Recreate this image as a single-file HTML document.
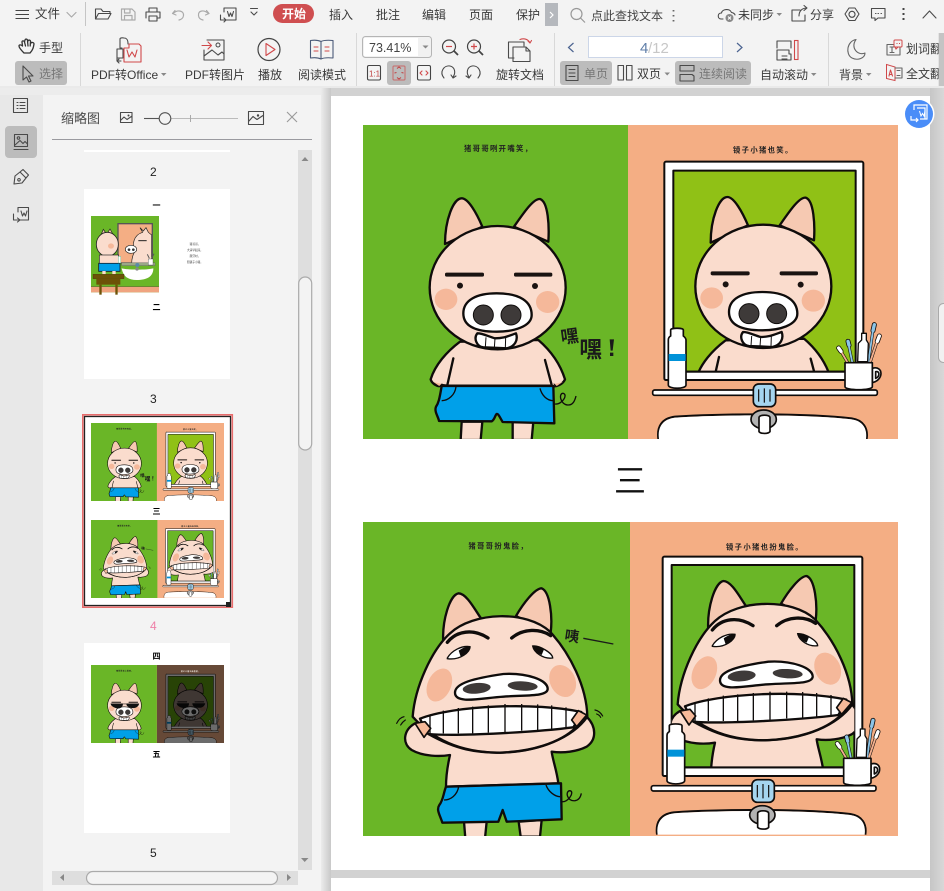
<!DOCTYPE html>
<html lang="zh-CN"><head><meta charset="utf-8"><title>PDF</title>
<style>
html,body{margin:0;padding:0;width:944px;height:891px;overflow:hidden;background:#d2d2d2}
svg{display:block}
text{font-family:"Liberation Sans","Noto Sans CJK SC",sans-serif;font-size:12px;fill:#3a3a3a}
.g{fill:#7d7d7d}
.i{fill:none;stroke:#4a4a4a;stroke-width:1.1;stroke-linejoin:round;stroke-linecap:round}
.l{fill:none;stroke:#aaa;stroke-width:1.2;stroke-linejoin:round;stroke-linecap:round}
.r{fill:none;stroke:#d0484a;stroke-width:1.1;stroke-linejoin:round;stroke-linecap:round}
.b{stroke:#0f0c0b;stroke-width:7;stroke-linejoin:round;stroke-linecap:round}
.n{fill:none}
.t{font-size:22px;font-weight:bold;fill:#222;letter-spacing:4px;text-anchor:middle}
.h{font-size:8px;font-weight:bold;fill:#000;text-anchor:middle}
</style></head><body>
<svg width="944" height="891" viewBox="0 0 944 891" xmlns="http://www.w3.org/2000/svg">
<defs>
<linearGradient id="gl" x1="0" x2="1" y1="0" y2="0"><stop offset="0" stop-color="#ececec"/><stop offset="1" stop-color="#c8c8c8"/></linearGradient>
<linearGradient id="gr" x1="0" x2="1" y1="0" y2="0"><stop offset="0" stop-color="#c6c6c6"/><stop offset="1" stop-color="#d8d8d8"/></linearGradient>
<clipPath id="cs"><rect width="535" height="314"/></clipPath>
<clipPath id="m1"><rect x="145" y="152" width="547" height="603"/></clipPath>
<clipPath id="m2"><rect x="140" y="135" width="548" height="607"/></clipPath>

<g id="pigA">
 <path class="b" fill="#fadccd" d="M300,665C260,695 225,735 212,778C215,790 235,805 245,795L262,797L570,797C590,805 610,790 615,778C600,730 570,690 535,660Z"/>
 <path class="b" fill="#f6b999" d="M216,785L238,800L246,792M612,785L590,800L582,792" style="stroke-width:3"/>
 <path class="b n" d="M280,715L262,795M555,720L575,795"/>
 <path class="b" fill="#fadccd" d="M305,905L302,960L362,960L367,905ZM458,905L458,960L515,960L520,905Z"/>
 <path class="b" fill="#00a0e9" d="M245,798L580,798L583,910L428,906C420,893 415,880 410,882C405,885 405,898 395,904L237,903C235,890 222,875 228,860C235,850 238,840 245,798Z"/>
 <path class="n" stroke="#0f0c0b" stroke-width="4" d="M245,842C265,842 285,825 288,800M580,842C560,842 545,825 540,805M585,852C605,855 625,825 610,820C595,818 600,855 625,855C640,855 645,840 648,828"/>
 <path class="b" fill="#f6c9b2" d="M255,372C255,300 280,235 305,235C325,235 350,280 367,320ZM462,320C490,280 520,235 540,237C565,245 568,320 565,365Z"/>
 <ellipse class="b" fill="#fadccd" cx="413" cy="503" rx="204" ry="185"/>
 <ellipse cx="258" cy="538" rx="34" ry="32" fill="#f5b89a"/><ellipse cx="563" cy="546" rx="35" ry="33" fill="#f5b89a"/>
 <rect x="255" y="458" width="117" height="12" rx="5" fill="#1a1311"/><rect x="462" y="458" width="115" height="12" rx="5" fill="#1a1311"/>
 <circle cx="300" cy="497" r="9" fill="#1a1311"/><circle cx="525" cy="498" r="9" fill="#1a1311"/>
 <path class="b" fill="#fff" d="M352,640C340,655 350,680 370,682L440,685C465,680 475,660 468,640C440,650 430,655 405,655C385,650 370,640 352,640Z"/>
 <path class="n" stroke="#0f0c0b" stroke-width="3" d="M378,652L376,682M405,655L403,684M437,652L436,684"/>
 <path class="b" fill="#fff" d="M310,580C310,540 350,520 410,520C480,520 515,545 515,585C515,620 460,635 410,635C350,635 310,620 310,580Z"/>
 <circle cx="370" cy="585" r="30" fill="#3e3a39" stroke="#0f0c0b" stroke-width="3"/><circle cx="453" cy="585" r="30" fill="#3e3a39" stroke="#0f0c0b" stroke-width="3"/>
</g>

<g id="fix">
 <rect class="b" style="stroke-width:5" fill="#fff" x="83" y="810" width="674" height="16" rx="6"/>
 <path class="n" stroke="#0f0c0b" stroke-width="6" d="M100,957C95,920 110,895 150,890C300,880 550,880 680,895C715,900 730,925 725,957"/><path fill="#fff" d="M102,957C97,923 112,898 150,893C300,883 550,883 680,898C713,903 727,925 723,957Z"/>
 <ellipse class="b" fill="#b3b3b3" style="stroke-width:5" cx="416" cy="898" rx="38" ry="28"/>
 <path class="b" style="stroke-width:5" fill="#fff" d="M402,893C402,883 435,883 435,893L435,935C430,942 408,942 402,935Z"/>
 <rect class="b" style="stroke-width:5" fill="#a5d5ef" x="385" y="792" width="67" height="68" rx="16"/>
 <path class="n" stroke="#0f0c0b" stroke-width="3.500" d="M401,808V845M418,805V848M435,808V845"/>
 <path class="b" style="stroke-width:5" fill="#fff" d="M137,648V630C137,623 175,623 175,630V648C180,652 183,655 183,660V795C183,808 130,808 130,795V660C130,655 133,650 137,648Z"/>
 <rect x="131" y="702" width="51" height="21" fill="#0092d8"/>
 <path class="n" stroke="#0f0c0b" stroke-width="9" d="M668,728L648,694M682,728L672,680M730,728L744,630M735,728L756,665"/>
 <path class="n" stroke="#0f0c0b" stroke-width="15" stroke-linecap="round" d="M648,694L641,684M672,676L669,664M744,632L748,614M757,664L763,648"/>
 <path class="n" stroke="#f3b08f" stroke-width="5.500" d="M668,728L648,694M735,728L756,665"/>
 <path class="n" stroke="#8cc4e6" stroke-width="5.500" d="M682,728L672,680M730,728L744,630"/>
 <path class="n" stroke="#fff" stroke-width="10" stroke-linecap="round" d="M648,694L641,684M757,664L763,648"/>
 <path class="n" stroke="#8cc4e6" stroke-width="10" stroke-linecap="round" d="M672,676L669,664M744,632L748,614"/>
 <path class="b" style="stroke-width:4" fill="#fff" d="M698,725L700,670L710,660V640H724V660L730,670L728,725Z"/>
 <path class="b" style="stroke-width:5" fill="#fff" d="M742,745C775,735 778,780 742,788ZM752,755C765,752 765,770 752,775Z"/>
 <path class="b" style="stroke-width:5" fill="#fff" d="M660,728H742V800C742,812 660,812 660,800Z"/>
</g>

<g id="pigB">
 <path class="b" fill="#f6c9b2" d="M250,372C245,300 270,225 295,220C320,220 345,270 365,298ZM468,288C490,250 525,205 545,205C570,215 578,290 572,338Z"/>
 <path class="b" fill="#fadccd" d="M312,905L316,955L375,955L380,905ZM476,905L482,950L540,950L545,900Z"/>
 <path class="b" fill="#fadccd" d="M165,610C130,630 125,670 155,690C190,710 240,710 270,705C262,740 258,770 258,800L595,790C590,750 578,720 575,695C610,700 650,695 680,680C710,660 710,620 680,590Z"/>
 <path class="b" fill="#00a0e9" d="M258,800L603,790L605,898L440,905L428,870L415,905L247,908C240,885 228,870 238,855C250,840 250,820 258,800Z"/>
 <path class="n" stroke="#0f0c0b" stroke-width="4" d="M252,840C272,840 292,825 296,800M600,830C585,830 565,815 558,795M605,845C625,848 645,815 630,812C615,812 620,845 645,842C658,840 662,830 664,820"/>
 <path class="b" fill="#fadccd" d="M158,590C165,500 215,390 270,340C340,275 500,270 570,335C630,400 680,500 682,590C640,650 540,698 410,698C300,695 220,660 158,590Z"/>
 <ellipse cx="238" cy="495" rx="35" ry="52" fill="#f5b89a" transform="rotate(25 238 495)"/>
 <ellipse cx="608" cy="483" rx="38" ry="50" fill="#f5b89a" transform="rotate(-25 608 483)"/>
 <path class="n" stroke="#0f0c0b" stroke-width="10" stroke-linecap="round" d="M262,367C290,332 340,325 384,354M455,354C490,325 540,325 572,347"/>
 <path stroke="#0f0c0b" stroke-width="4" fill="#fff" d="M262,414C275,392 305,376 330,380C332,395 300,422 262,416ZM518,378C540,376 578,400 578,414C550,418 522,398 518,378Z"/>
 <path fill="#0f0c0b" d="M296,392C310,382 322,378 330,380C328,394 315,404 302,410ZM518,378C530,377 542,382 552,388L545,405C530,400 522,390 518,378Z"/>
 <path class="b" fill="#fff" d="M285,518C285,490 340,475 430,462C500,458 565,480 563,508C560,530 500,525 430,530C370,533 285,555 285,518Z"/>
 <ellipse cx="350" cy="505" rx="42" ry="16" fill="#3e3a39" transform="rotate(-5 350 505)"/><ellipse cx="488" cy="498" rx="45" ry="14" fill="#3e3a39" transform="rotate(3 488 498)"/>
 <path class="b" fill="#fff" d="M180,596C280,556 530,546 664,576C660,590 650,605 640,622C540,635 300,650 205,642C195,630 188,612 180,596Z"/>
 <path class="n" stroke="#0f0c0b" stroke-width="4" d="M250,572V640M295,564V640M338,560V640M385,556V638M435,552V636M485,552V632M533,553V630M575,556V628M618,562V625M210,585V640"/>
 <path class="b n" d="M205,642C290,690 350,698 420,698C510,695 600,670 648,622"/>
 <path class="b" style="stroke-width:5" fill="#f6b999" d="M165,610L195,605L212,625L192,652ZM680,585L655,572L635,600L650,620Z"/>
 <path class="n" stroke="#0f0c0b" stroke-width="3.500" stroke-linecap="round" d="M110,610C116,598 122,592 132,590M122,615C126,608 130,604 136,600M705,570C715,572 722,578 728,588M710,582C716,584 720,588 722,592"/>
</g>

<g id="s1"><g clip-path="url(#cs)">
 <rect width="266" height="314" fill="#6ab627"/><rect x="265" width="270" height="314" fill="#f4ae84"/>
 <g transform="translate(-3,-5) scale(.33333)">
  <text class="t" x="416" y="93">猪哥哥咧开嘴笑，</text>
  <use href="#pigA"/>
  <text x="602" y="668" style="font-size:54px;font-weight:bold;fill:#1a1a1a" transform="rotate(-8 630 650)">嘿</text>
  <text x="658" y="712" style="font-size:68px;font-weight:bold;fill:#1a1a1a">嘿</text>
  <path fill="#1a1a1a" d="M749,658H762L758,692H752ZM750,698H760V708H750Z"/>
 </g>
 <g transform="translate(262,-5) scale(.33333)">
  <text class="t" x="415" y="97">镜子小猪也笑。</text>
  <rect class="b" style="stroke-width:6" fill="#fff" x="118" y="125" width="597" height="655" rx="5"/>
  <rect class="b" style="stroke-width:6" fill="#90c116" x="145" y="152" width="547" height="603"/>
  <g clip-path="url(#m1)"><use href="#pigA" transform="translate(2,-4)"/></g>
  <path d="M145,755H692" stroke="#0f0c0b" stroke-width="6"/>
  <use href="#fix"/>
 </g>
</g></g>

<g id="s2"><g clip-path="url(#cs)">
 <rect width="268" height="314" fill="#6ab627"/><rect x="267" width="268" height="314" fill="#f4ae84"/>
 <g transform="translate(-3,-2) scale(.33333)">
  <text class="t" x="416" y="85">猪哥哥扮鬼脸，</text>
  <use href="#pigB"/>
  <text x="614" y="365" style="font-size:44px;font-weight:bold;fill:#1a1a1a" transform="rotate(8 640 350)">咦</text>
  <path d="M670,355L760,372" stroke="#1a1a1a" stroke-width="4"/>
 </g>
 <g transform="translate(262,-2) scale(.33333)">
  <text class="t" x="420" y="88">镜子小猪也扮鬼脸。</text>
  <rect class="b" style="stroke-width:6" fill="#fff" x="113" y="110" width="599" height="658" rx="5"/>
  <rect class="b" style="stroke-width:6" fill="#6ab627" x="140" y="135" width="548" height="607"/>
  <g clip-path="url(#m2)"><use href="#pigB" transform="translate(0,-37)"/></g>
  <path d="M140,742H688" stroke="#0f0c0b" stroke-width="6"/>
  <use href="#fix" transform="translate(-4,-13)"/>
 </g>
</g></g>

<g id="s3"><g clip-path="url(#cs)">
 <rect width="266" height="314" fill="#6ab627"/><rect x="265" width="270" height="314" fill="#f4ae84"/>
 <g transform="translate(-3,-5) scale(.33333)">
  <text class="t" x="416" y="93">猪哥哥戴上墨镜，</text>
  <use href="#pigA"/>
  <path fill="#111" d="M245,480H395C395,530 355,550 310,535C280,525 250,510 245,480ZM435,480H590C585,515 550,540 510,535C470,530 435,520 435,480Z"/>
  <path d="M395,485H435" stroke="#111" stroke-width="7"/>
 </g>
 <g transform="translate(262,-5) scale(.33333)">
  <rect class="b" style="stroke-width:6" fill="#fff" x="118" y="125" width="597" height="655" rx="5"/>
  <rect class="b" style="stroke-width:6" fill="#5fa010" x="145" y="152" width="547" height="603"/>
  <g clip-path="url(#m1)"><use href="#pigA" transform="translate(2,-4)" style="filter:brightness(.6)"/>
  <path fill="#111" d="M247,476H397C397,526 357,546 312,531C282,521 252,506 247,476ZM437,476H592C587,511 552,536 512,531C472,526 437,516 437,476Z"/>
  <ellipse cx="412" cy="577" rx="102" ry="57" fill="#fff" stroke="#111" stroke-width="6"/><circle cx="372" cy="581" r="30" fill="#222"/><circle cx="455" cy="581" r="30" fill="#222"/></g>
  <use href="#fix"/>
  <rect x="10" y="0" width="815" height="960" fill="#000" opacity=".58"/>
  <text class="t" x="415" y="97" style="fill:#e8e0d8">镜子小猪也戴墨镜。</text>
 </g>
</g></g>
</defs>

<!-- backgrounds -->
<rect width="944" height="891" fill="#d2d2d2"/>
<rect x="0" y="88" width="43" height="803" fill="#e8e8e8"/>
<rect x="43" y="88" width="278" height="803" fill="#f3f3f3"/>
<rect x="321" y="88" width="10" height="803" fill="url(#gl)"/>
<rect x="930" y="88" width="14" height="803" fill="url(#gr)"/>
<rect x="0" y="0" width="944" height="88" fill="#f3f3f3"/>
<rect x="0" y="88" width="321" height="7" fill="#ececec"/>

<!-- row 1 -->
<path d="M15.500 10.500H29M15.500 14.500H29M15.500 18.500H29" stroke="#444" stroke-width="1.100"/>
<text x="35" y="18" style="font-size:12.500px">文件</text>
<path class="l" d="M67,12.500L71.500,17L76,12.500"/>
<path d="M85.500,2V26" stroke="#c5c5c5"/>
<path class="i" d="M95.500,19V9H101L103,11.500H110V13.500M95.500,19L98.500,13.500H111L108,19Z"/>
<path class="l" d="M121.500,9H132L135,12V20H121.500ZM124.500,9V13H130V9M124.500,20V15.500H132V20"/>
<path class="i" d="M149,12V8H157V12M146,18V12H160V18H157M149,16H157V21H149V16"/>
<path class="l" d="M175,10.500L172.500,13.500L176,15M173,13.500C178,9 184,11 183.500,15.500C183.300,18 181,19.500 179,20"/>
<path class="l" d="M206.500,10.500L209,13.500L205.500,15M208.500,13.500C203,9 198,11 198.500,15.500C198.700,18 200.500,19.500 203,20"/>
<path class="i" d="M224,8H236V20H226M224,8V12M227.500,11.500L229,16.500L230.500,13L232,16.500L233.500,11.500M220.500,15V20H226M224,18L226,20L224,22"/>
<path class="i" d="M250.500,8.500H257.500M251,12L254,15L257,12"/>
<rect x="273" y="4" width="41" height="19" rx="9.500" fill="#cf4e50"/>
<text x="282" y="18" style="fill:#fff;font-size:12px;font-weight:bold">开始</text>
<text x="329" y="19">插入</text><text x="376" y="19">批注</text><text x="422" y="19">编辑</text><text x="469" y="19">页面</text><text x="516" y="19">保护</text>
<rect x="545" y="3" width="13" height="23" fill="#b5b8bd"/>
<path d="M550,12L553,15L550,18" fill="none" stroke="#fff" stroke-width="1.200"/>
<circle cx="576.500" cy="14" r="5.500" fill="none" stroke="#999" stroke-width="1.200"/><path d="M580.500,18L585,22.500" stroke="#999" stroke-width="1.200"/>
<text x="591" y="20" style="fill:#444">点此查找文本</text>
<path d="M673.500,10V11.500M673.500,15V16.500M673.500,20V21.500" stroke="#666" stroke-width="1.800"/>
<path class="i" d="M723,19H721C717.500,19 717,13 721.500,13C722,9 730,8 731.500,12.500C733,12.500 735,14 735,15"/>
<circle cx="729.500" cy="18" r="4" fill="#888"/><path d="M728,16.500L731,19.500M731,16.500L728,19.500" stroke="#fff"/>
<text x="738" y="19">未同步</text>
<path d="M776.500,13H782L779.300,16Z" fill="#888"/>
<path class="i" d="M800,10H792V21H805V15M799,16C799,11 802,8 807,8M804,5.500L807,8L804,10.500"/>
<text x="810" y="19">分享</text>
<path class="i" d="M849,8H855L859,14L855,20.500H849L845,14ZM852,11.300A3,3 0 1 0 852.010,11.300"/>
<path class="i" d="M871.500,8.500H885V18H878L875,20.500V18H871.500ZM875.500,13.500H876M878,13.500H878.500M881,13.500H881.500"/>
<path d="M903.500,8V10M903.500,13V15M903.500,18V20" stroke="#444" stroke-width="2"/>
<path class="i" d="M923,18L929.500,11L936,18"/>

<!-- row 2 -->
<path d="M24,53C22,51 19,48 19,46C19,44.500 21,44.500 22.500,46L22,42C22,40.500 24,40.500 24.500,42L25,40C25.500,38.500 27.500,39 27.500,40.500L28,41C28.500,39.500 30.500,40 30.500,41.500L31,43C32,42 34,42.500 34,44C33.500,47 33,50 30,53ZM24.500,42L25.500,46M27.500,40.500L28,46M30.500,41.500L30.200,46" fill="none" stroke="#333" stroke-width="1.300" stroke-linejoin="round" stroke-linecap="round"/>
<text x="39" y="52">手型</text>
<rect x="15" y="61" width="52" height="24" rx="3" fill="#bcbcbc"/>
<path class="i" d="M23,66L23,80L26.500,77L29,82L31,81L28.500,76L33,76Z"/>
<text x="39" y="78" style="fill:#777">选择</text>
<path d="M80.500,33V86" stroke="#d8d8d8"/>
<path class="i" d="M122,48H120V39C120,38 122,37.500 124,38C127,38 128,40 128,44M117,49H123V58H117ZM121,61L117,61V58M119,63L117,61L119,59"/>
<path class="r" d="M129,44H139L141,46V62H124V48H129ZM127,50L129,57L132,52L135,57L137,50"/>
<text x="91" y="79">PDF转Office</text>
<path d="M161,73H166.500L163.700,76Z" fill="#888"/>
<path class="i" d="M207,40H224V60H204V50"/>
<path class="r" d="M202,45.500H211M208,42L211.500,45.500L208,49"/>
<path class="i" d="M204,56L212,50L218,55L222,52L224,54"/>
<circle cx="218" cy="45" r="2" fill="none" stroke="#444"/>
<text x="185" y="79">PDF转图片</text>
<circle cx="269" cy="49.500" r="11" fill="none" stroke="#444" stroke-width="1.200"/>
<path class="r" d="M266,43.500L275,49.500L266,55.500Z"/>
<text x="258" y="79">播放</text>
<path class="i" d="M321,41.500C318,40 314,40 310.500,40.500V58C314,57.500 318,57.500 321,59C324,57.500 328,57.500 333,58V40.500C328,40 324,40 321,41.500V59" style="stroke:#4b5a78"/>
<path class="r" d="M314,47H318M314,51H318M325,47H329M325,51H329"/>
<text x="298" y="79">阅读模式</text>
<path d="M356.500,33V86" stroke="#d8d8d8"/>
<rect x="362.500" y="36.500" width="69" height="21" rx="3" fill="#f1f1f1" stroke="#b5b5b5"/>
<rect x="364" y="38" width="54" height="18" fill="#fff"/>
<text x="369" y="52" style="fill:#444;font-size:12.500px">73.41%</text>
<path d="M422.500,45.500H428.500L425.500,48.500Z" fill="#888"/>
<circle cx="449" cy="46.500" r="6.500" fill="none" stroke="#444" stroke-width="1.200"/><path d="M446,46.500H452" stroke="#d0484a" stroke-width="1.200"/><path d="M454,51L458,55" stroke="#444" stroke-width="1.800"/>
<circle cx="474" cy="46.500" r="6.500" fill="none" stroke="#444" stroke-width="1.200"/><path d="M471,46.500H477M474,43.500V49.500" stroke="#d0484a" stroke-width="1.200"/><path d="M479,51L483,55" stroke="#444" stroke-width="1.800"/>
<rect x="367.500" y="65.500" width="13" height="14.500" rx="1.500" fill="none" stroke="#444" stroke-width="1.100"/>
<text x="369" y="76.500" style="font-size:8px;fill:#c04040">1:1</text>
<rect x="387" y="61" width="24" height="24" rx="3" fill="#bcbcbc"/>
<rect x="393" y="66" width="12" height="14" rx="1" fill="none" stroke="#c86a6a"/><path d="M396.500,72.500L394.500,73M401.500,72.500L403.500,73M397,68.500L399,67L401,68.500M397,77.500L399,79L401,77.500" fill="none" stroke="#c04040"/>
<rect x="417.500" y="65.500" width="13" height="14.500" rx="1.500" fill="none" stroke="#444" stroke-width="1.100"/>
<path class="r" d="M422,71L420,73L422,75M426,71L428,73L426,75"/>
<path class="i" d="M444,78C439,72 444,65 450,66C455,67 456,73 453,77M451,75L453,78L456,76"/>
<path class="i" d="M478,78C483,72 478,65 472,66C467,67 466,73 469,77M471,75L469,78L466,76"/>
<path class="i" d="M514,58H508.500V42H524V46M513,47H526L530,51V61.500H513ZM526,47V51H530"/>
<path class="r" d="M520,39.500C524,38 528,39 530,43M530,43L528,41M530,43L531.500,40.500"/>
<text x="496" y="79">旋转文档</text>
<path d="M554.500,33V86" stroke="#d8d8d8"/>
<path d="M573.500,43L568.500,47.500L573.500,52" fill="none" stroke="#4b6390" stroke-width="1.200"/>
<rect x="588.500" y="36.500" width="134" height="21" fill="#fff" stroke="#ccd6e8"/>
<text x="640" y="53" style="fill:#5f7ea8;font-size:15px">4</text>
<text x="648" y="53" style="fill:#c7c7c7;font-size:15px">/12</text>
<path d="M737,43L742,47.500L737,52" fill="none" stroke="#4b6390" stroke-width="1.200"/>
<rect x="560" y="61" width="52" height="24" rx="3" fill="#bcbcbc"/>
<path class="i" d="M566,65.500H578V80.500H566ZM569,69.500H575M569,73H575M569,76.500H575"/>
<text x="584" y="78" style="fill:#777">单页</text>
<path class="i" d="M618,65.500H623.500V80H618ZM626.500,65.500H632V80H626.500Z"/>
<text x="637" y="78">双页</text>
<path d="M664.500,72.500H670L667.200,75.500Z" fill="#888"/>
<rect x="675" y="61" width="76" height="24" rx="3" fill="#bcbcbc"/>
<path class="i" d="M680,65.500H694V71H680ZM680,74.500H692L694,76V81H680Z"/>
<text x="699" y="78" style="fill:#777">连续阅读</text>
<path class="i" d="M777,48V41H791V48M777,60V50H789V54H791V60ZM782,56H787M782,59H787"/>
<rect x="794.500" y="40.500" width="3.500" height="19" fill="none" stroke="#d0484a" stroke-width="1.100"/>
<text x="760" y="79">自动滚动</text>
<path d="M811,73H816.500L813.700,76Z" fill="#888"/>
<path d="M828.500,33V86" stroke="#d8d8d8"/>
<path class="i" d="M856,39.500C847,41 845,54 852,58C858,61 865,58 865,53C858,56 850,48 856,39.500Z" style="stroke:#666"/>
<text x="839" y="79">背景</text>
<path d="M866,73H871.500L868.700,76Z" fill="#888"/>
<path class="i" d="M887,44.500H900V55H887ZM890,47H894M892,47V52.500M890,52.500H894" style="stroke:#666"/>
<rect x="894" y="40" width="8" height="7" rx="1" fill="#f3f3f3" stroke="#d0484a"/><path d="M895,47L896,49L898,47" fill="none" stroke="#d0484a"/><path d="M896.500,43.500H897.500M899,43.500H900" stroke="#d0484a"/>
<text x="906" y="53">划词翻译</text>
<path d="M886.500,64.500L895,67V80.500L886.500,78.500Z" fill="#f3f3f3" stroke="#d0484a"/>
<path class="r" d="M889,76L890.500,70L892.500,76M889.500,74.500H892"/>
<path class="i" d="M895,68H902V78H895M897,70.500H900M897,75.500H900" style="stroke:#666"/>
<text x="906" y="78">全文翻译</text>
<rect x="938.700" y="33" width="5.300" height="54" fill="#c4c4c4"/>
<rect x="0" y="86" width="944" height="2" fill="#eaeaea"/>

<!-- left rail -->
<path class="i" d="M13.500,98.500H27.500V112.500H13.500ZM17,102.500H18M20,102.500H25M17,105.500H18M20,105.500H25M17,108.500H18M20,108.500H25"/>
<rect x="5" y="126" width="32" height="32" rx="4" fill="#bcbcbc"/>
<path class="i" d="M14.500,134.500H27.500V146.500H14.500ZM15,145L20,140.500L23,143.500L25,141.500L27.500,144M14,149.500H28"/>
<circle cx="18.500" cy="138" r="1.300" fill="none" stroke="#444"/>
<path class="i" d="M14,184L15,176L20,172L26,178L22,183ZM20,172L23,169.500L28.500,175L26,178M19,178.500A1.300,1.300 0 1 0 19.010,178.500"/>
<path class="i" d="M18,207.500H28.500V220H20M18,207.500V212M21,211L22.500,216L24,213L25.500,216L27,211M13.500,214V220H20M17.500,218L20,220L17.500,222"/>

<!-- thumb panel header -->
<text x="61" y="123" style="font-size:13px;fill:#4a4a4a">缩略图</text>
<path class="i" d="M120.500,112.500H132V122.500H120.500ZM121,120L124,117L127,119.500L132,116"/><circle cx="128.500" cy="115.500" r="1" fill="#444"/>
<path d="M144,118.500H159" stroke="#555" stroke-width="1.100"/><path d="M171,118.500H238" stroke="#bbb" stroke-width="1.100"/><path d="M190.500,115V122" stroke="#aaa"/>
<circle cx="165" cy="118.500" r="5.800" fill="#f3f3f3" stroke="#555" stroke-width="1.100"/>
<path class="i" d="M248.500,111.500H263.500V124.500H248.500ZM249,121L253,116.500L257,119.500L263,115.500"/><circle cx="258" cy="115.500" r="1.200" fill="#444"/>
<path d="M287,112L297,122M297,112L287,122" stroke="#999" stroke-width="1.100"/>
<rect x="52" y="139" width="260" height="1" fill="#9a9a9f"/>

<!-- thumb scrollbars -->
<rect x="298" y="150" width="14" height="720" fill="#dedede"/>
<path d="M301.500,161H308.500L305,157Z" fill="#888"/>
<path d="M301,858H308.500L304.700,862Z" fill="#888"/>
<rect x="298.700" y="277" width="13" height="173" rx="6.500" fill="#f3f3f3" stroke="#aaa" stroke-width="1.200"/>
<rect x="52" y="871" width="246" height="14" fill="#dedede"/>
<path d="M64,874V881L60,877.500Z" fill="#888"/>
<rect x="86.500" y="871.500" width="191" height="13" rx="6.500" fill="#f3f3f3" stroke="#aaa" stroke-width="1.200"/>
<path d="M287,874V881L291,877.500Z" fill="#888"/>

<!-- thumb 2 tail -->
<rect x="84" y="150" width="146" height="2" fill="#fff"/>
<text x="150" y="176" style="font-size:12px;fill:#222">2</text>

<!-- thumb 3 -->
<rect x="84" y="189" width="146" height="190" fill="#fff"/>
<text class="h" x="156.500" y="208">一</text>
<g transform="translate(0,95) scale(.33333)">
 <rect x="273" y="363" width="204" height="229" fill="#6ab627"/>
 <rect x="273" y="575" width="204" height="17" fill="#f0a480"/><path d="M273,575H477" stroke="#6a6a3a" stroke-width="2"/>
 <rect x="354" y="386" width="103" height="118" fill="#f4ae84" stroke="#555" stroke-width="4"/>
 <path d="M395,505C395,490 400,475 405,470C395,450 400,420 428,412L420,398L430,408L438,398L445,412L455,420V505Z" fill="#fadccd" stroke="#222" stroke-width="2"/>
 <path d="M415,437H440" stroke="#222" stroke-width="3"/>
 <path d="M303,420L310,403L320,418L330,402L340,420Z" fill="#f6c9b2" stroke="#222" stroke-width="2"/>
 <ellipse cx="322" cy="448" rx="33" ry="36" fill="#fadccd" stroke="#222" stroke-width="2.500"/>
 <ellipse cx="333" cy="453" rx="9" ry="8" fill="#f5b89a"/>
 <rect x="298" y="480" width="58" height="30" fill="#fadccd" stroke="#222" stroke-width="2"/>
 <path d="M365,503H465V512H365Z" fill="#9aa888" stroke="#555"/>
 <path d="M365,520C385,525 440,525 460,520C460,545 440,555 410,555C385,555 370,545 365,520Z" fill="#fff"/>
 <rect x="296" y="505" width="64" height="24" fill="#00a0e9" stroke="#123" stroke-width="2.500"/>
 <rect x="307" y="528" width="10" height="10" fill="#fadccd"/><rect x="337" y="528" width="10" height="10" fill="#fadccd"/>
 <ellipse cx="393" cy="463" rx="17" ry="12" fill="#fff" stroke="#222" stroke-width="2"/><circle cx="387" cy="464" r="4" fill="#333"/><circle cx="400" cy="464" r="4" fill="#333"/>
 <rect x="279" y="538" width="93" height="13" fill="#6d5207" stroke="#3b2c05"/><rect x="289" y="551" width="72" height="18" fill="#6d5207"/>
 <rect x="298" y="569" width="7" height="30" fill="#6d5207"/><rect x="346" y="569" width="7" height="30" fill="#6d5207"/>
 <circle cx="412" cy="510" r="6" fill="#5a8aa8"/><circle cx="411" cy="522" r="5" fill="#888"/>
 <rect x="445" y="492" width="14" height="18" fill="#fff" stroke="#333"/>
 <path d="M448,490L442,478M455,490L462,476" stroke="#555" stroke-width="3"/>
 <rect x="355" y="484" width="7" height="20" fill="#fff" stroke="#4a7"/>
 <text x="585" y="450" text-anchor="middle" style="font-size:8px;fill:#333">猪哥哥，</text><text x="585" y="468" text-anchor="middle" style="font-size:8px;fill:#333">大清早起床，</text><text x="585" y="486" text-anchor="middle" style="font-size:8px;fill:#333">刷牙时，</text><text x="585" y="504" text-anchor="middle" style="font-size:8px;fill:#333">照镜子小猪。</text>
</g>
<text class="h" x="156.500" y="310">二</text>
<text x="150" y="403" style="font-size:12px;fill:#222">3</text>

<!-- thumb 4 -->
<rect x="82.800" y="414.800" width="149.500" height="192.400" fill="#fff" stroke="#e86c6c" stroke-width="1.600"/>
<rect x="84.500" y="416.500" width="146" height="189" fill="none" stroke="#222" stroke-width="1.300"/>
<use href="#s1" transform="translate(91,423) scale(.2486)"/>
<text class="h" x="156.500" y="514">三</text>
<use href="#s2" transform="translate(91,520) scale(.2486)"/>
<rect x="226" y="602" width="5" height="5" fill="#222"/>
<text x="150" y="630" style="font-size:12px;fill:#ee7fa7">4</text>

<!-- thumb 5 -->
<rect x="84" y="643" width="146" height="190" fill="#fff"/>
<text class="h" x="156.500" y="659">四</text>
<use href="#s3" transform="translate(91,665) scale(.2486)"/>
<text class="h" x="156.500" y="757">五</text>
<text x="150" y="857" style="font-size:12px;fill:#222">5</text>

<!-- main page -->
<rect x="331" y="96" width="599" height="774" fill="#fff"/>
<rect x="331" y="878" width="599" height="13" fill="#fff"/>
<use href="#s1" transform="translate(363,125)"/>
<text x="630" y="492" text-anchor="middle" style="font-size:32px;fill:#111">三</text>
<use href="#s2" transform="translate(363,522)"/>
<rect x="938.500" y="303.500" width="10" height="59" rx="5" fill="#f1f1f1" stroke="#aaa"/>

<!-- float button -->
<circle cx="919" cy="114" r="15.500" fill="#fff"/>
<circle cx="919" cy="114" r="14" fill="#4a8df8"/>
<path d="M914,110V105H927V119H920M917,108H925V119M911,116V120H918M916,118L918,120L916,122" fill="none" stroke="#fff" stroke-width="1.200"/>
<path d="M919.500,111L921,116L922.500,113.500L924,116L925,111" fill="none" stroke="#fff"/>
</svg>
</body></html>
